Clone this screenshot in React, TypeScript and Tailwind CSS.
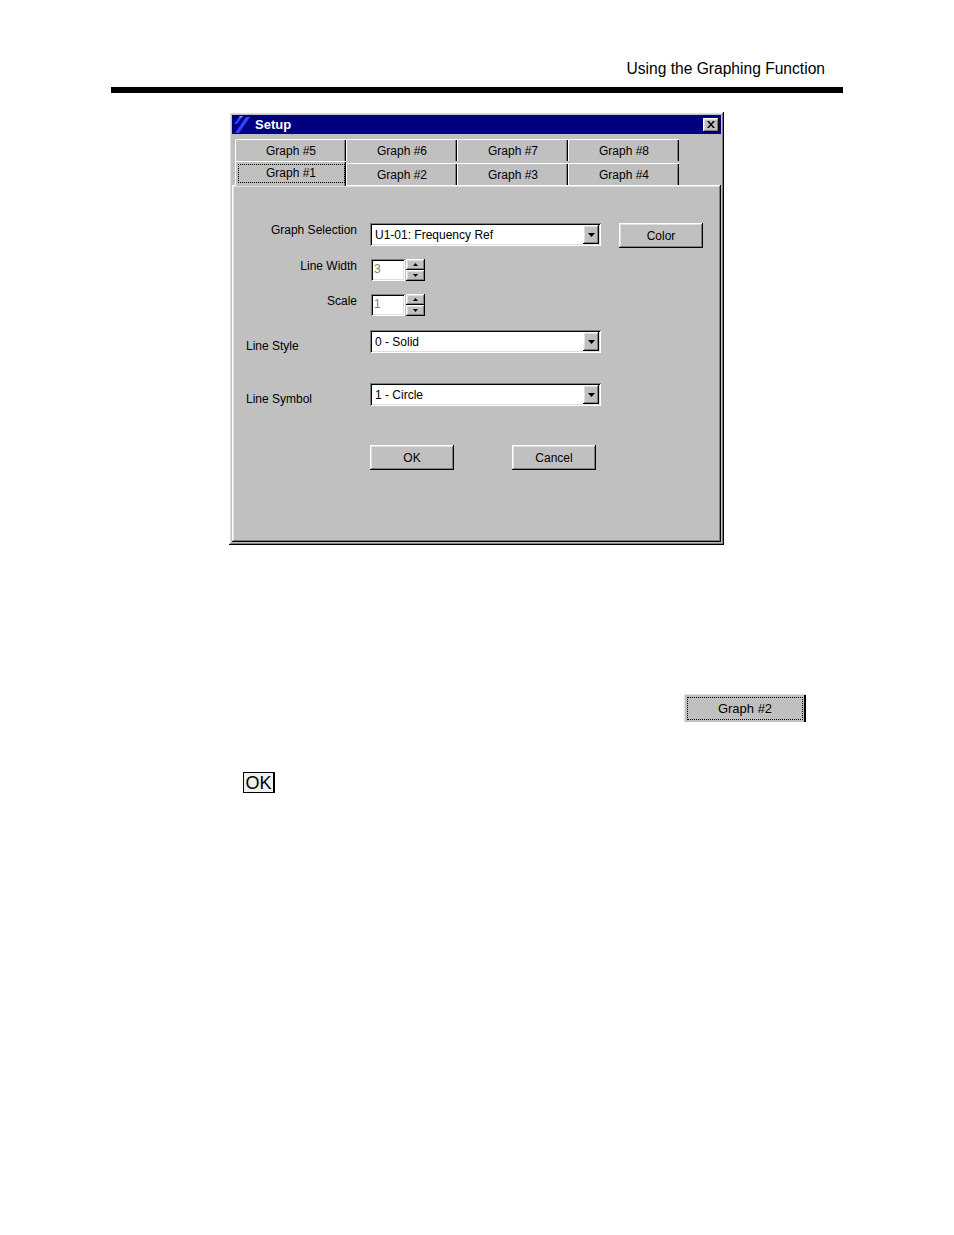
const raised =
  "shadow-[inset_-1px_-1px_0_#000,inset_1px_1px_0_#fff,inset_-2px_-2px_0_#808080,inset_2px_2px_0_#dfdfdf]";
const sunken =
  "shadow-[inset_1px_1px_0_#808080,inset_-1px_-1px_0_#fff,inset_2px_2px_0_#000,inset_-2px_-2px_0_#dfdfdf]";

const TopTabs = ["Graph #5", "Graph #6", "Graph #7", "Graph #8"];
const FrontTabs = ["Graph #2", "Graph #3", "Graph #4"];

const Combo = ({ value }: { value: string }) => (
  <div className={`ml-[138px] w-[231px] h-[23px] bg-white flex items-center p-[2px] ${sunken}`}>
    <span className="flex-1 pl-[3px] text-[12px] leading-[14px] text-black">{value}</span>
    <div className={`w-[16px] h-[19px] bg-[#c0c0c0] flex items-center justify-center ${raised}`}>
      <svg width="7" height="4" viewBox="0 0 7 4">
        <path d="M0 0h7L3.5 4z" fill="#000" />
      </svg>
    </div>
  </div>
);

const Spin = ({ label, value }: { label: string; value: string }) => (
  <div className="flex h-[22px]">
    <div className="w-[125px] text-right text-[12px] leading-[14px] text-black">{label}</div>
    <div className={`ml-[14px] w-[34px] h-[22px] bg-white pl-[3px] pt-[3px] text-[12px] leading-[14px] text-[#808080] ${sunken}`}>
      {value}
    </div>
    <div className="ml-[1px] w-[19px] flex flex-col">
      <div className={`h-[11px] bg-[#c0c0c0] flex items-center justify-center ${raised}`}>
        <svg width="5" height="3" viewBox="0 0 5 3">
          <path d="M2.5 0L5 3H0z" fill="#000" />
        </svg>
      </div>
      <div className={`h-[11px] bg-[#c0c0c0] flex items-center justify-center ${raised}`}>
        <svg width="5" height="3" viewBox="0 0 5 3">
          <path d="M0 0h5L2.5 3z" fill="#000" />
        </svg>
      </div>
    </div>
  </div>
);

const Button = ({ label, className }: { label: string; className: string }) => (
  <div
    className={`w-[84px] h-[25px] bg-[#c0c0c0] flex items-center justify-center text-[12px] text-black ${raised} ${className}`}
  >
    {label}
  </div>
);

export default function App() {
  return (
    <div
      className="w-[954px] h-[1235px] bg-white overflow-hidden"
      style={{ fontFamily: '"Liberation Sans", Arial, sans-serif' }}
    >
      <div className="pt-[60px] pr-[129px] text-right text-[15.6px] leading-[18px] text-black">
        Using the Graphing Function
      </div>
      <div className="mt-[9px] ml-[111px] w-[732px] h-[6px] bg-black" />

      {/* Setup dialog */}
      <div className={`mt-[19px] ml-[229px] w-[495px] h-[433px] bg-[#c0c0c0] p-[3px] flex flex-col ${raised}`}>
        <div className="h-[19px] bg-[#000080] flex items-center">
          <svg width="19" height="19" viewBox="0 0 19 19" className="ml-[1px]">
            <path d="M1 9L7 1h3L4 9z" fill="#2848ff" />
            <path d="M2 18L13 2h4L6 18z" fill="#2848ff" />
            <path d="M7 1h3l-1 1.5H6z" fill="#7890ff" />
          </svg>
          <span className="ml-[3px] text-[13px] font-bold text-white leading-[15px]">Setup</span>
          <div className={`ml-auto mr-[2px] w-[16px] h-[14px] bg-[#c0c0c0] flex items-center justify-center ${raised}`}>
            <svg width="8" height="7" viewBox="0 0 8 7">
              <path d="M0 0h2l2 2.5L6 0h2L5 3.5 8 7H6L4 4.5 2 7H0l3-3.5z" fill="#000" />
            </svg>
          </div>
        </div>

        {/* tabs */}
        <div className="mt-[5px] flex pl-[3px]">
          {TopTabs.map((t) => (
            <div
              key={t}
              className="w-[111px] h-[22px] border-t border-l border-white rounded-tl-[2px] shadow-[inset_-1px_0_0_#000,inset_-2px_0_0_#808080] flex items-center justify-center text-[12px] text-black"
            >
              {t}
            </div>
          ))}
        </div>
        <div className="flex items-end pl-[3px] h-[24px]">
          <div className="relative z-10 -mb-[1px] w-[111px] h-[25px] bg-[#c0c0c0] border-t border-l border-white shadow-[inset_-1px_0_0_#000,inset_-2px_0_0_#808080] flex items-center justify-center pb-[2px]">
            <div className="w-[107px] h-[19px] border border-dotted border-black flex items-center justify-center text-[12px] text-black">
              Graph #1
            </div>
          </div>
          {FrontTabs.map((t) => (
            <div
              key={t}
              className="w-[111px] h-[22px] border-t border-l border-white shadow-[inset_-1px_0_0_#000,inset_-2px_0_0_#808080] flex items-center justify-center text-[12px] text-black"
            >
              {t}
            </div>
          ))}
        </div>

        {/* tab body */}
        <div className={`flex-1 pt-[38px] ${raised}`}>
          <div className="flex h-[25px]">
            <div className="w-[125px] text-right text-[12px] leading-[14px] text-black">Graph Selection</div>
            <div className={`ml-[13px] w-[231px] h-[23px] bg-white flex items-center p-[2px] ${sunken}`}>
              <span className="flex-1 pl-[3px] text-[12px] leading-[14px] text-black">U1-01: Frequency Ref</span>
              <div className={`w-[16px] h-[19px] bg-[#c0c0c0] flex items-center justify-center ${raised}`}>
                <svg width="7" height="4" viewBox="0 0 7 4">
                  <path d="M0 0h7L3.5 4z" fill="#000" />
                </svg>
              </div>
            </div>
            <Button label="Color" className="ml-[18px]" />
          </div>

          <div className="mt-[11px]">
            <Spin label="Line Width" value="3" />
          </div>
          <div className="mt-[13px]">
            <Spin label="Scale" value="1" />
          </div>

          <div className="mt-[14px] relative">
            <div className="absolute left-[14px] top-[9px] text-[12px] leading-[14px] text-black">Line Style</div>
            <Combo value="0 - Solid" />
          </div>
          <div className="mt-[30px] relative">
            <div className="absolute left-[14px] top-[9px] text-[12px] leading-[14px] text-black">Line Symbol</div>
            <Combo value="1 - Circle" />
          </div>

          <div className="mt-[39px] flex">
            <Button label="OK" className="ml-[138px]" />
            <Button label="Cancel" className="ml-[58px]" />
          </div>
        </div>
      </div>

      {/* inline Graph #2 button */}
      <div className="mt-[149px] ml-[684px] w-[122px] h-[28px] bg-[#c0c0c0] border-t border-l border-[#dfdfdf] shadow-[inset_-2px_0_0_#000] flex items-center justify-center p-[2px] pr-[3px]">
        <div className="w-full h-full border border-dotted border-black flex items-center justify-center text-[13px] text-black">
          Graph #2
        </div>
      </div>

      {/* OK keycap */}
      <div className="mt-[50px] ml-[243px] w-[32px] h-[21px] bg-[#f0f0f0] border border-black border-r-2 flex items-center justify-center text-[18px] leading-[20px] text-black">
        OK
      </div>
    </div>
  );
}
